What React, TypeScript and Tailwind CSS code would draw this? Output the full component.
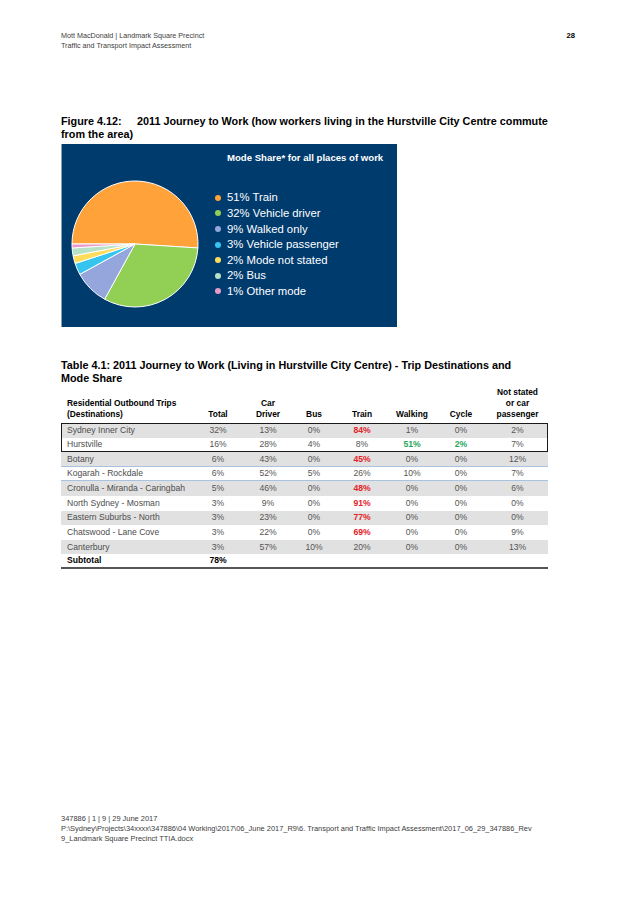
import React from 'react'

const font = { fontFamily: '"Liberation Sans", Arial, sans-serif' }

const slices = [
  { pct: 51, color: '#ffa23a', label: '51% Train' },
  { pct: 32, color: '#92cf55', label: '32% Vehicle driver' },
  { pct: 9, color: '#94a6dc', label: '9% Walked only' },
  { pct: 3, color: '#35c5ee', label: '3% Vehicle passenger' },
  { pct: 2, color: '#ffdc5c', label: '2% Mode not stated' },
  { pct: 2, color: '#b6e2c6', label: '2% Bus' },
  { pct: 1, color: '#e89bc8', label: '1% Other mode' },
]

function Pie() {
  const cx = 64
  const cy = 64
  const r = 63
  let angle = 270
  const pt = (a: number) => {
    const rad = (a * Math.PI) / 180
    return [cx + r * Math.sin(rad), cy - r * Math.cos(rad)]
  }
  return (
    <svg width="128" height="128" viewBox="0 0 128 128">
      {slices.map((s) => {
        const start = angle
        const end = angle + s.pct * 3.6
        angle = end
        const [x1, y1] = pt(start)
        const [x2, y2] = pt(end)
        const large = end - start > 180 ? 1 : 0
        return (
          <path
            key={s.label}
            d={`M${cx},${cy} L${x1},${y1} A${r},${r} 0 ${large} 1 ${x2},${y2} Z`}
            fill={s.color}
            stroke="#ffffff"
            strokeWidth="1"
            strokeLinejoin="round"
          />
        )
      })}
    </svg>
  )
}

type Row = {
  name: string
  vals: string[]
  train?: 'red'
  walk?: 'green'
  cycle?: 'green'
  blue?: boolean
}

const rows: Row[] = [
  { name: 'Sydney Inner City', vals: ['32%', '13%', '0%', '84%', '1%', '0%', '2%'], train: 'red' },
  { name: 'Hurstville', vals: ['16%', '28%', '4%', '8%', '51%', '2%', '7%'], walk: 'green', cycle: 'green' },
  { name: 'Botany', vals: ['6%', '43%', '0%', '45%', '0%', '0%', '12%'], train: 'red', blue: true },
  { name: 'Kogarah - Rockdale', vals: ['6%', '52%', '5%', '26%', '10%', '0%', '7%'], blue: true },
  { name: 'Cronulla - Miranda - Caringbah', vals: ['5%', '46%', '0%', '48%', '0%', '0%', '6%'], train: 'red' },
  { name: 'North Sydney - Mosman', vals: ['3%', '9%', '0%', '91%', '0%', '0%', '0%'], train: 'red' },
  { name: 'Eastern Suburbs - North', vals: ['3%', '23%', '0%', '77%', '0%', '0%', '0%'], train: 'red' },
  { name: 'Chatswood - Lane Cove', vals: ['3%', '22%', '0%', '69%', '0%', '0%', '9%'], train: 'red' },
  { name: 'Canterbury', vals: ['3%', '57%', '10%', '20%', '0%', '0%', '13%'] },
]

const cols = 'grid grid-cols-[132px_50px_50px_42px_54px_46px_52px_61px]'

function DataRow({ row, gray }: { row: Row; gray: boolean }) {
  const cls = (i: number) => {
    if (i === 3 && row.train) return 'text-[#e3232b] font-bold'
    if (i === 4 && row.walk) return 'text-[#1fa95b] font-bold'
    if (i === 5 && row.cycle) return 'text-[#1fa95b] font-bold'
    return 'text-[#555]'
  }
  return (
    <div
      className={`${cols} h-[14.6px] items-center text-[8.6px] ${gray ? 'bg-[#e1e1e1]' : 'bg-white'} ${
        row.blue ? 'border-b border-[#a8c3df]' : ''
      }`}
    >
      <div className="pl-[6px] text-[#4d4d4d] whitespace-nowrap">{row.name}</div>
      {row.vals.map((v, i) => (
        <div key={i} className={`text-center ${cls(i)}`}>
          {v}
        </div>
      ))}
    </div>
  )
}

export default function App() {
  return (
    <div className="w-[637px] h-[901px] bg-white flex flex-col pt-[31px] pl-[61px] pr-[62px]" style={font}>
      <div className="flex justify-between text-[7.2px] leading-[9.5px] text-[#3d3d3d]">
        <div>
          <div>Mott MacDonald | Landmark Square Precinct</div>
          <div>Traffic and Transport Impact Assessment</div>
        </div>
        <div className="font-bold text-black text-[7.6px]">28</div>
      </div>

      <div className="mt-[65px] text-[10.8px] leading-[13px] font-bold text-black whitespace-nowrap">
        <div className="flex">
          <span className="w-[76px] shrink-0">Figure 4.12:</span>
          <span>2011 Journey to Work (how workers living in the Hurstville City Centre commute</span>
        </div>
        <div>from the area)</div>
      </div>

      <div className="mt-[3px] w-[336px] h-[183px] bg-[#003b6e] flex border-l border-[#8aa0b8]">
        <div className="ml-[9px] mt-[36px] shrink-0">
          <Pie />
        </div>
        <div className="ml-[16px] flex flex-col">
          <div className="pl-[12px] pt-[8px] text-[9.6px] leading-[12px] font-bold text-white whitespace-nowrap">
            Mode Share* for all places of work
          </div>
          <div className="mt-[26px] flex flex-col">
            {slices.map((s) => (
              <div key={s.label} className="flex items-center h-[15.6px]">
                <span className="w-[6px] h-[6px] rounded-full shrink-0" style={{ backgroundColor: s.color }} />
                <span className="ml-[6px] text-[11.3px] text-white whitespace-nowrap">{s.label}</span>
              </div>
            ))}
          </div>
        </div>
      </div>

      <div className="mt-[32px] text-[10.8px] leading-[13px] font-bold text-black whitespace-nowrap">
        <div>Table 4.1: 2011 Journey to Work (Living in Hurstville City Centre) - Trip Destinations and</div>
        <div>Mode Share</div>
      </div>

      <div className="mt-[2px] w-[487px]">
        <div className={`${cols} items-end text-[8.4px] leading-[11px] font-bold text-black pb-[3px]`}>
          <div className="pl-[6px]">
            Residential Outbound Trips
            <br />
            (Destinations)
          </div>
          <div className="text-center">Total</div>
          <div className="text-center">
            Car
            <br />
            Driver
          </div>
          <div className="text-center">Bus</div>
          <div className="text-center">Train</div>
          <div className="text-center">Walking</div>
          <div className="text-center">Cycle</div>
          <div className="text-center">
            Not stated
            <br />
            or car
            <br />
            passenger
          </div>
        </div>

        <div className="outline-[1.5px] outline-solid outline-[#1a1a1a] -outline-offset-1">
          <DataRow row={rows[0]} gray={true} />
          <DataRow row={rows[1]} gray={false} />
        </div>
        {rows.slice(2).map((r, i) => (
          <DataRow key={r.name} row={r} gray={i % 2 === 0} />
        ))}
        <div className={`${cols} h-[14.6px] items-center text-[8.6px] font-bold text-black border-b-2 border-[#555]`}>
          <div className="pl-[6px]">Subtotal</div>
          <div className="text-center">78%</div>
        </div>
      </div>

      <div className="mt-auto mb-[57px] text-[7.45px] leading-[10px] text-[#3d3d3d] whitespace-nowrap">
        <div>347886 | 1 | 9 | 29 June 2017</div>
        <div>
          {'P:\\Sydney\\Projects\\34xxxx\\347886\\04 Working\\2017\\06_June 2017_R9\\6. Transport and Traffic Impact Assessment\\2017_06_29_347886_Rev'}
        </div>
        <div>9_Landmark Square Precinct TTIA.docx</div>
      </div>
    </div>
  )
}
